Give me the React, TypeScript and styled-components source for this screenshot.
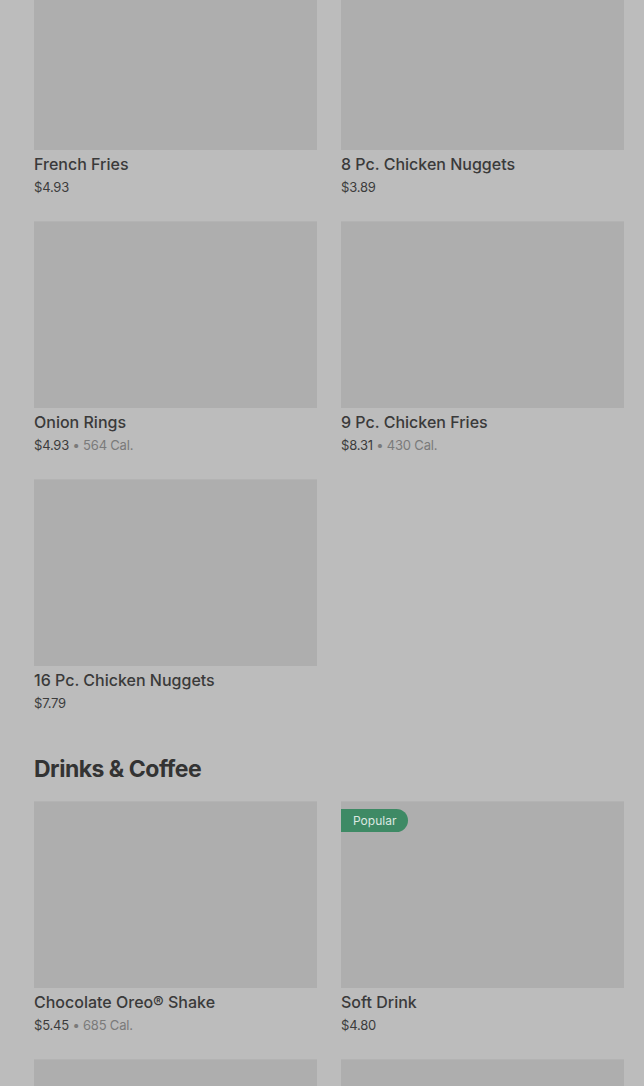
import React from 'react';
import styled, { createGlobalStyle } from 'styled-components';

const GlobalStyle = createGlobalStyle`
  html, body {
    margin: 0;
    padding: 0;
    background: #bcbcbc;
    font-family: Inter, 'Noto Sans', 'Liberation Sans', sans-serif;
    overflow: hidden;
  }
`;

type Item = {
  name: string;
  price: string;
  cal?: string;
  badge?: string;
};

const sides: Item[] = [
  { name: 'French Fries', price: '$4.93' },
  { name: '8 Pc. Chicken Nuggets', price: '$3.89' },
  { name: 'Onion Rings', price: '$4.93', cal: '564 Cal.' },
  { name: '9 Pc. Chicken Fries', price: '$8.31', cal: '430 Cal.' },
  { name: '16 Pc. Chicken Nuggets', price: '$7.79' },
];

const drinks: Item[] = [
  { name: 'Chocolate Oreo® Shake', price: '$5.45', cal: '685 Cal.' },
  { name: 'Soft Drink', price: '$4.80', badge: 'Popular' },
  { name: 'Coffee', price: '$2.19' },
  { name: 'Iced Coffee', price: '$3.29' },
];

const Page = styled.div`
  padding: 0 20px 0 34px;
  margin-top: -37px;
`;

const Section = styled.section`
  margin-bottom: 43px;
`;

const SectionTitle = styled.h2`
  margin: 0 0 18px;
  font-size: 23px;
  line-height: 28px;
  font-weight: 700;
  letter-spacing: -0.5px;
  color: #333333;
`;

const Grid = styled.div`
  display: grid;
  grid-template-columns: 283px 283px;
  column-gap: 24px;
  row-gap: 25px;
`;

const Card = styled.div`
  display: flex;
  flex-direction: column;
`;

const Thumb = styled.div`
  position: relative;
  height: 187px;
  background: #aeaeae;
  border-top: 1px solid #b3b3b3;
  box-sizing: border-box;
`;

const Badge = styled.span`
  position: absolute;
  top: 7px;
  left: 0;
  height: 23px;
  padding: 0 12px;
  display: flex;
  align-items: center;
  background: #3e8a65;
  color: #dce8e1;
  font-size: 12px;
  border-radius: 0 12px 12px 0;
`;

const Name = styled.div`
  margin-top: 4px;
  font-size: 16px;
  line-height: 20px;
  font-weight: 500;
  color: #3a3a3a;
`;

const Meta = styled.div`
  margin-top: 4px;
  font-size: 13px;
  line-height: 18px;
  letter-spacing: -0.2px;
  color: #3c3c3c;
`;

const Cal = styled.span`
  color: #7a7a7a;
`;

function MenuCard({ item }: { item: Item }) {
  return (
    <Card>
      <Thumb>{item.badge && <Badge>{item.badge}</Badge>}</Thumb>
      <Name>{item.name}</Name>
      <Meta>
        {item.price}
        {item.cal && <Cal> • {item.cal}</Cal>}
      </Meta>
    </Card>
  );
}

export default function App() {
  return (
    <>
      <GlobalStyle />
      <Page>
        <Section>
          <Grid>
            {sides.map((it) => (
              <MenuCard key={it.name} item={it} />
            ))}
          </Grid>
        </Section>
        <Section>
          <SectionTitle>Drinks &amp; Coffee</SectionTitle>
          <Grid>
            {drinks.map((it) => (
              <MenuCard key={it.name} item={it} />
            ))}
          </Grid>
        </Section>
      </Page>
    </>
  );
}
